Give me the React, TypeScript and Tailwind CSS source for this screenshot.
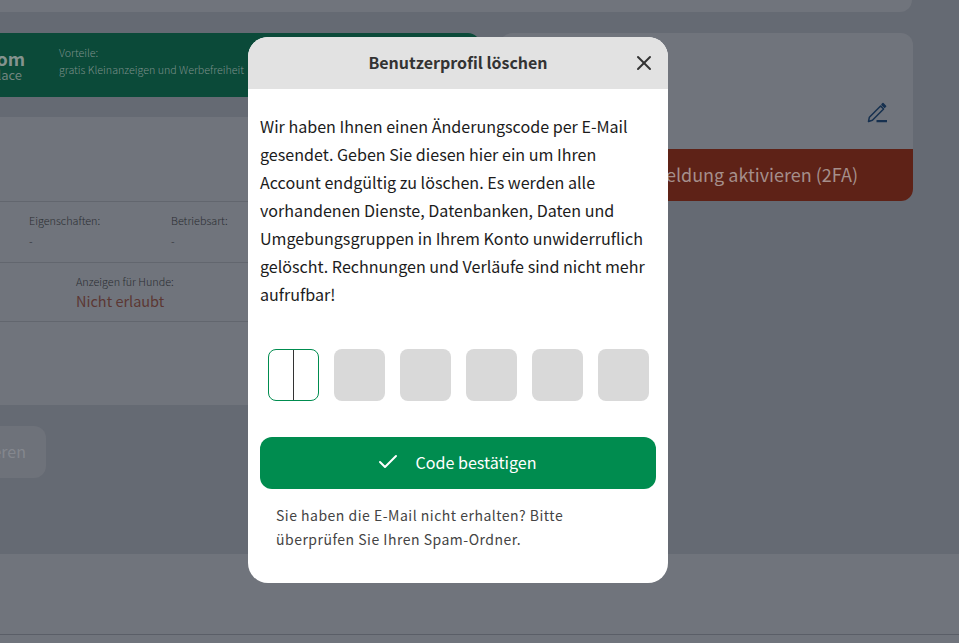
import React from "react";
import { Check, X } from "lucide-react";

const font = { fontFamily: '"Noto Sans CJK SC", "Noto Sans", sans-serif' };

function PenIcon() {
  return (
    <svg width="24" height="24" viewBox="0 0 24 24" fill="none" stroke="#16304f" strokeWidth="1.5" strokeLinejoin="round">
      <path d="M3.5 20.5 L4.4 16.2 L15.6 5 L18.6 8 L7.4 19.2 Z" />
      <path d="M17 3.6 L18 2.6 L20.6 5.2 L19.6 6.2 Z" fill="#16304f" />
      <path d="M11.5 20.2 H22" strokeWidth="2.2" />
    </svg>
  );
}

function InfoCell({ label, value, className }: { label: string; value: string; className: string }) {
  return (
    <div className={className}>
      <div className="text-[10.8px] leading-[18px] font-light text-[#2b2e33]">{label}</div>
      <div className="mt-[2px] text-[10.8px] leading-[18px] font-light text-[#2b2e33]">{value}</div>
    </div>
  );
}

export default function App() {
  return (
    <div className="relative h-[643px] w-[959px] overflow-hidden bg-[#656a73]" style={font}>
      <div className="h-[12px] w-[912px] rounded-br-xl bg-[#70747c]" />

      <div className="ml-[-400px] mt-[21px] flex w-[1313px] gap-[20px]">
        <div className="w-[880px]">
          <div className="flex h-[64px] items-center rounded-tr-xl bg-[#0b4a39]">
            <div className="w-[425px] text-right">
              <div className="text-[18px] font-bold leading-[20px] text-[#84938f]">Hundeforum.com</div>
              <div className="pr-[3px] text-[13px] leading-[14px] text-[#71857f]">Marketplace</div>
            </div>
            <div className="mb-[9px] ml-[34px] text-[10.7px] leading-[17px] font-light text-[#7a8f89]">
              <div>Vorteile:</div>
              <div>gratis Kleinanzeigen und Werbefreiheit</div>
            </div>
          </div>

          <div className="mt-[20px] h-[288px] bg-[#70747c]">
            <div className="h-[84px]" />
            <div className="flex h-[61px] border-t border-[#62666e] pl-[429px] pt-[9px]">
              <InfoCell label="Eigenschaften:" value="-" className="w-[142px]" />
              <InfoCell label="Betriebsart:" value="-" className="w-[142px]" />
            </div>
            <div className="h-[60px] border-y border-[#62666e] pl-[476px] pt-[9px]">
              <div className="text-[10.8px] leading-[18px] font-light text-[#2b2e33]">Anzeigen für Hunde:</div>
              <div className="text-[14.5px] leading-[22px] text-[#5c3733]">Nicht erlaubt</div>
            </div>
          </div>

          <div className="h-[148px] pl-[300px] pt-[21px]">
            <div className="flex h-[52px] w-[146px] items-center justify-end rounded-xl bg-[#6e727a] pb-[2px] pr-[20px] text-[16px] text-[#84878e]">
              Aktivieren
            </div>
          </div>
        </div>

        <div className="h-[168px] w-[413px] overflow-hidden rounded-xl bg-[#70747c]">
          <div className="flex h-[116px] items-end justify-end pb-[24px] pl-0 pr-[24px]">
            <PenIcon />
          </div>
          <div className="flex h-[52px] items-center justify-end whitespace-nowrap bg-[#5e2217] pb-[2px] pr-[55px] text-[18px] text-[#a58f8b]">
            Zwei-Faktor-Anmeldung aktivieren (2FA)
          </div>
        </div>
      </div>

      <div className="absolute inset-x-0 bottom-0 h-[89px] bg-[#70747c]">
        <div className="mt-[80px] border-t border-[#5a5e67]" />
      </div>

      <div className="absolute left-[248px] top-[37px] h-[546px] w-[420px] overflow-hidden rounded-[20px] bg-white">
        <div className="relative flex h-[52px] items-center justify-center bg-[#e2e2e2] pb-[2px]">
          <span className="text-[16px] font-semibold text-[#333333]">Benutzerprofil löschen</span>
          <X className="absolute right-[12px] top-[14px] text-[#333333]" size={24} strokeWidth={2} />
        </div>

        <div className="px-[12px] pt-[23px]">
          <p className="text-[16.1px] leading-[28px] text-[#1c1c1c]">
            Wir haben Ihnen einen Änderungscode per E-Mail gesendet. Geben Sie diesen hier ein um Ihren Account endgültig zu löschen. Es werden alle vorhandenen Dienste, Datenbanken, Daten und Umgebungsgruppen in Ihrem Konto unwiderruflich gelöscht. Rechnungen und Verläufe sind nicht mehr aufrufbar!
          </p>

          <div className="mt-[41px] flex gap-[15px] pl-[8px]">
            <div className="flex h-[52px] w-[51px] justify-center rounded-lg border border-[#008c4f] bg-white">
              <div className="h-full w-px bg-[#333333]" />
            </div>
            {[0, 1, 2, 3, 4].map((i) => (
              <div key={i} className="h-[52px] w-[51px] rounded-lg bg-[#d9d9d9]" />
            ))}
          </div>

          <button className="mt-[36px] flex h-[52px] w-[396px] items-center justify-center gap-[15px] rounded-xl bg-[#008c4f] pb-[2px] pr-[3px] text-[16.1px] text-white">
            <Check size={24} strokeWidth={2} />
            Code bestätigen
          </button>

          <p className="mt-[14px] pl-[16px] pr-[60px] text-[14px] leading-[24px] tracking-[0.5px] text-[#444444]">
            Sie haben die E-Mail nicht erhalten? Bitte überprüfen Sie Ihren Spam-Ordner.
          </p>
        </div>
      </div>
    </div>
  );
}
